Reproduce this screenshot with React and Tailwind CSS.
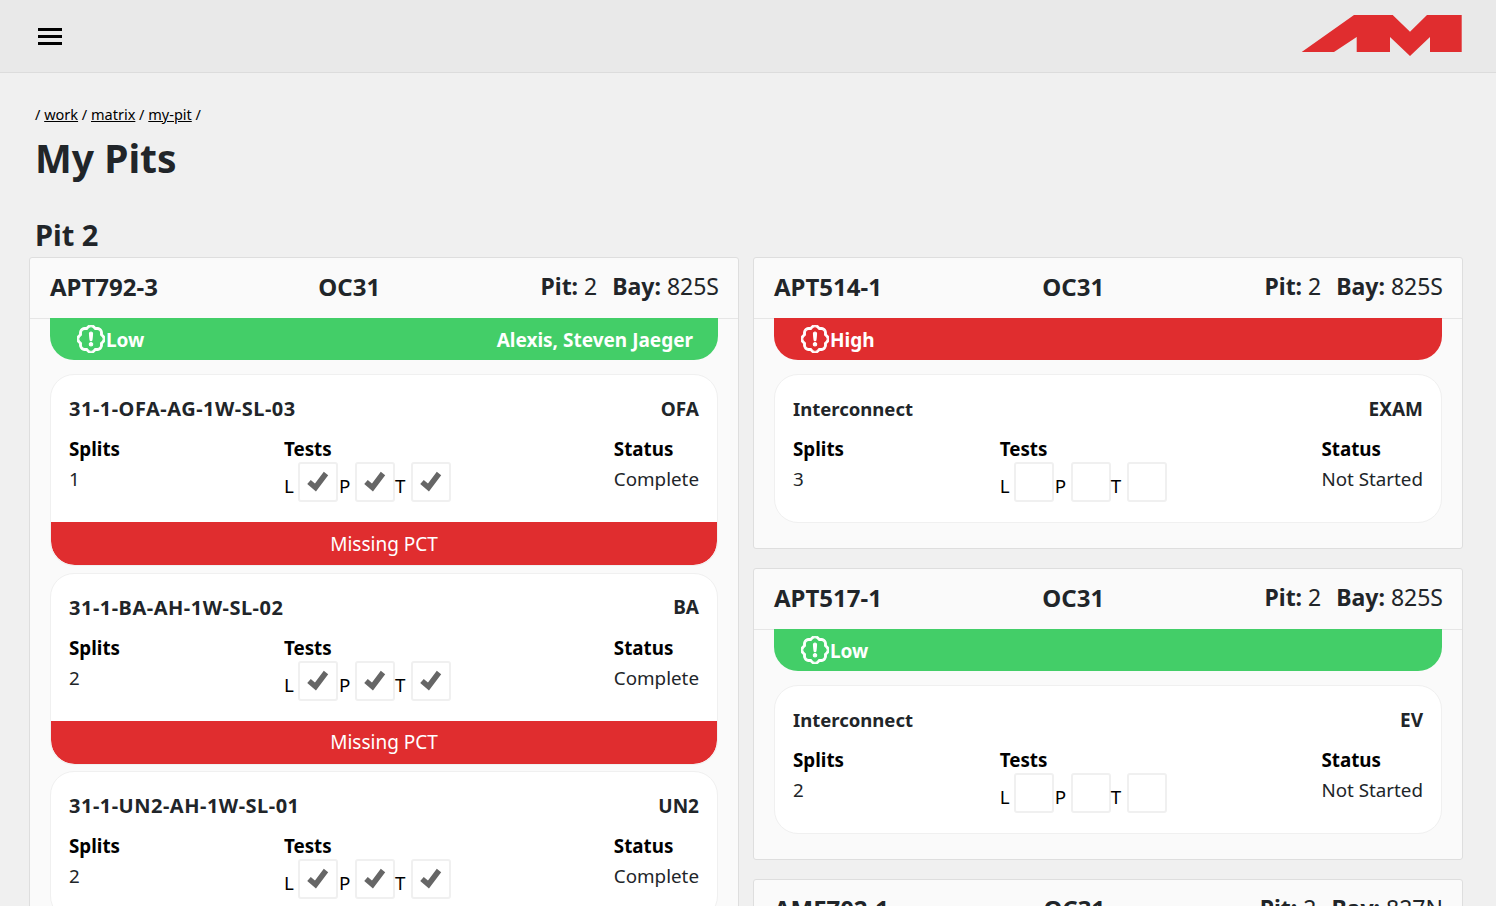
import React from 'react';
import { BsPatchExclamation } from 'react-icons/bs';

const font = "font-['Noto_Sans','Open_Sans',sans-serif]";

const pits = {
    left: [
        {
            id: 'APT792-3', job: 'OC31', pit: 2, bay: '825S', priority: 'Low', crew: 'Alexis, Steven Jaeger',
            parts: [
                { name: '31-1-OFA-AG-1W-SL-03', code: 'OFA', splits: 1, done: true, status: 'Complete', note: 'Missing PCT' },
                { name: '31-1-BA-AH-1W-SL-02', code: 'BA', splits: 2, done: true, status: 'Complete', note: 'Missing PCT' },
                { name: '31-1-UN2-AH-1W-SL-01', code: 'UN2', splits: 2, done: true, status: 'Complete' },
            ],
        },
    ],
    right: [
        {
            id: 'APT514-1', job: 'OC31', pit: 2, bay: '825S', priority: 'High',
            parts: [{ name: 'Interconnect', code: 'EXAM', splits: 3, done: false, status: 'Not Started' }],
        },
        {
            id: 'APT517-1', job: 'OC31', pit: 2, bay: '825S', priority: 'Low',
            parts: [{ name: 'Interconnect', code: 'EV', splits: 2, done: false, status: 'Not Started' }],
        },
        {
            id: 'AMF702-1', job: 'OC31', pit: 2, bay: '827N', priority: 'Low',
            parts: [],
        },
    ],
};

const Logo = () => (
    <svg width="162" height="44" viewBox="0 0 162 44" fill="#e02d2f">
        <path d="M1.7 38 L54 1 L92.7 1 L110 17.7 L127 1 L161.7 1 L161.7 38 L130 38 L130 23 L110 42 L90 23 L90 38 L56.7 38 L56.7 23 L34 38 Z" />
    </svg>
);

const TestBox = ({ done }) => (
    <div className="flex h-10 w-10 items-center justify-center rounded-[3px] border-2 border-[#f0f0f0] bg-white">
        {done && (
            <svg width="22" height="22" viewBox="0 0 22 22" fill="none" stroke="#666666" strokeWidth="5.5">
                <path d="M2 11 L8.5 16.5 L19 2.5" />
            </svg>
        )}
    </div>
);

const Part = ({ part }) => (
    <div className="overflow-hidden rounded-3xl border border-[#f0f0f0] bg-white">
        <div className="px-[18px] pt-[19px] pb-[20px]">
            <div className="flex h-[30px] items-center justify-between text-[19px] font-bold text-[#212529]">
                <span className={part.name === 'Interconnect' ? 'text-[18.5px]' : 'text-[20px] tracking-[0.5px]'}>{part.name}</span>
                <span>{part.code}</span>
            </div>
            <div className="mt-[10px] flex justify-between text-[18.8px]">
                <div>
                    <div className="h-[30px] leading-[30px] font-bold text-black">Splits</div>
                    <div className="leading-[30px] text-[#212529]">{part.splits}</div>
                </div>
                <div className="pl-px">
                    <div className="h-7 leading-[30px] font-bold text-black">Tests</div>
                    <div className="flex items-end text-black">
                        <span className="w-[14px] leading-[31px]">L</span>
                        <TestBox done={part.done} />
                        <span className="w-[17px] pl-px leading-[31px]">P</span>
                        <TestBox done={part.done} />
                        <span className="w-[16px] leading-[31px]">T</span>
                        <TestBox done={part.done} />
                    </div>
                </div>
                <div>
                    <div className="h-[30px] leading-[30px] font-bold text-black">Status</div>
                    <div className="leading-[30px] text-[#212529]">{part.status}</div>
                </div>
            </div>
        </div>
        {part.note && (
            <div className="flex h-[43px] items-center justify-center rounded-b-3xl bg-[#e02d2f] pt-px text-[19px] text-white">
                {part.note}
            </div>
        )}
    </div>
);

const PitCard = ({ item }) => (
    <div className="rounded-[3px] border border-[#dedede] bg-[#fafafa]">
        <div className="flex h-[61px] items-center justify-between border-b border-[#e6e6e6] pr-[19px] pb-[3px] pl-5 text-[23px] text-[#212529]">
            <span className="text-[24px] font-bold">{item.id}</span>
            <span className="text-[24px] font-bold">{item.job}</span>
            <span>
                <span className="font-bold">Pit:</span> {item.pit}
                <span className="ml-[15px] font-bold">Bay:</span> {item.bay}
            </span>
        </div>
        <div className="-mt-px px-5 pb-[25px]">
            <div className={`relative flex h-[42px] items-center justify-between rounded-b-3xl pr-[25px] pl-[27px] text-[19px] font-bold text-white ${item.priority === 'High' ? 'bg-[#e02d2f]' : 'bg-[#43ce68]'}`}>
                <span className="flex items-center gap-px">
                    <BsPatchExclamation className="h-7 w-7" style={{ strokeWidth: 0.6, stroke: 'white' }} />
                    <span className="pt-[2px]">{item.priority}</span>
                </span>
                {item.crew && <span className="pt-[2px]">{item.crew}</span>}
            </div>
            <div className="mt-[14px] flex flex-col gap-[6.5px]">
                {item.parts.map(part => <Part key={part.name} part={part} />)}
            </div>
        </div>
    </div>
);

export default function App() {
    return (
        <div className={`h-screen overflow-hidden bg-[#f0f0f0] ${font}`}>
            <header className="flex h-[73px] items-center justify-between border-b border-[#dcdcdc] bg-[#e9e9e9] pr-[34px] pl-[38px]">
                <div className="flex w-[24px] flex-col gap-[4px]">
                    <span className="h-[3px] bg-black" />
                    <span className="h-[3px] bg-black" />
                    <span className="h-[3px] bg-black" />
                </div>
                <Logo />
            </header>
            <main className="pt-[30px] pr-[33px] pl-[29px]">
                <div className="pl-[6px] text-[14.5px] leading-[22px] text-black">
                    / <a className="underline">work</a> / <a className="underline">matrix</a> / <a className="underline">my-pit</a> /
                </div>
                <h1 className="mt-[9px] pl-[6px] text-[39px] leading-[48px] font-bold text-[#212529]">My Pits</h1>
                <h2 className="mt-[35px] pl-[6px] text-[29px] leading-[36px] font-bold text-[#212529]">Pit 2</h2>
                <div className="mt-1 grid grid-cols-2 items-start gap-x-[14px]">
                    <div className="flex flex-col gap-[19px]">
                        {pits.left.map(item => <PitCard key={item.id} item={item} />)}
                    </div>
                    <div className="flex flex-col gap-[19px]">
                        {pits.right.map(item => <PitCard key={item.id} item={item} />)}
                    </div>
                </div>
            </main>
        </div>
    );
}
